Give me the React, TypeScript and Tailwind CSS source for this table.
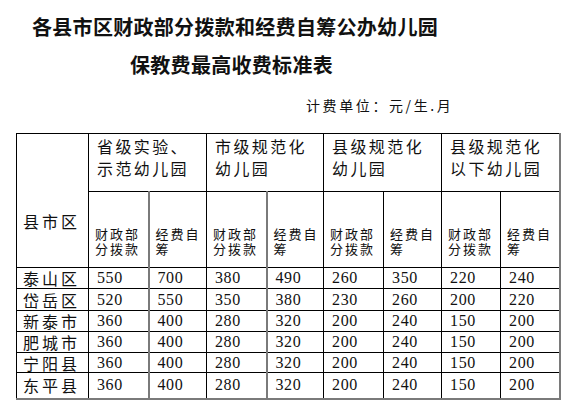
import React from "react";

const rows: [string, number[]][] = [
  ["泰山区", [550, 700, 380, 490, 260, 350, 220, 240]],
  ["岱岳区", [520, 550, 350, 380, 230, 260, 200, 220]],
  ["新泰市", [360, 400, 280, 320, 200, 240, 150, 200]],
  ["肥城市", [360, 400, 280, 320, 200, 240, 150, 200]],
  ["宁阳县", [360, 400, 280, 320, 200, 240, 150, 200]],
  ["东平县", [360, 400, 280, 320, 200, 240, 150, 200]],
];

const rowHeights = ["h-[21px]", "h-[22px]", "h-[21px]", "h-[21px]", "h-[20px]", "h-[26px]"];

const cjk = { fontFamily: '"Noto Sans CJK SC", sans-serif' };
const serif = { fontFamily: '"Liberation Serif", "Noto Sans CJK SC", serif' };

// gray, thicker rules sit after columns 2 and 4 and on the right edge
const colBorder = (i: number) =>
  i === 0 || i === 2 || i === 7 ? "border-r-2 border-r-[#7a7a7a]" : "";

export default function App() {
  return (
    <div className="w-[577px] h-[401px] bg-white text-[#111] overflow-hidden" style={cjk}>
      {/* Title */}
      <div className="pl-[32px] pt-[15px] text-[20px] leading-[24px] font-bold tracking-[0.3px]">
        各县市区财政部分拨款和经费自筹公办幼儿园
      </div>
      <div className="pl-[130px] mt-[14px] text-[20px] leading-[24px] font-bold tracking-[0.3px]">
        保教费最高收费标准表
      </div>
      <div className="pl-[306px] mt-[18px] text-[14px] leading-[20px] tracking-[2.6px]">
        计费单位：元/生.月
      </div>

      {/* Table */}
      <table className="ml-[16px] mt-[18px] w-[542px] table-fixed border-collapse">
        <colgroup>
          <col className="w-[72px]" />
          <col className="w-[60px]" />
          <col className="w-[58px]" />
          <col className="w-[60px]" />
          <col className="w-[57px]" />
          <col className="w-[60px]" />
          <col className="w-[58px]" />
          <col className="w-[59px]" />
          <col className="w-[59px]" />
        </colgroup>
        <thead>
          <tr className="h-[58px]">
            <th
              rowSpan={2}
              className="border border-black align-top pt-[77px] pl-[6px] text-left font-normal text-[16px] leading-[20px] tracking-[3px]"
            >
              县市区
            </th>
            {["省级实验、|示范幼儿园", "市级规范化|幼儿园", "县级规范化|幼儿园", "县级规范化|以下幼儿园"].map(
              (t, i) => (
                <th
                  key={t}
                  colSpan={2}
                  className={`border border-black align-top pl-[8px] pt-[1px] text-left font-normal text-[16px] leading-[22px] tracking-[2.4px] ${
                    i === 3 ? "border-r-2 border-r-[#7a7a7a]" : ""
                  }`}
                >
                  {t.split("|")[0]}
                  <br />
                  {t.split("|")[1]}
                </th>
              )
            )}
          </tr>
          <tr className="h-[76px]">
            {Array.from({ length: 8 }).map((_, i) => (
              <th
                key={i}
                className={`border border-black align-top pt-[34px] pl-[6px] text-left font-normal text-[13px] leading-[15px] tracking-[2px] ${colBorder(i)}`}
              >
                {i % 2 === 0 ? (
                  <>
                    财政部
                    <br />
                    分拨款
                  </>
                ) : (
                  <>
                    经费自
                    <br />
                    筹
                  </>
                )}
              </th>
            ))}
          </tr>
        </thead>
        <tbody>
          {rows.map(([name, vals], r) => (
            <tr key={name} className={rowHeights[r]}>
              <td
                className={`border border-black pl-[6px] text-[16px] leading-[18px] tracking-[3px] ${
                  r === rows.length - 1 ? "border-b-2 border-b-[#7a7a7a]" : ""
                }`}
              >
                {name}
              </td>
              {vals.map((v, i) => (
                <td
                  key={i}
                  className={`border border-black pl-[8px] text-[16px] leading-[18px] tracking-[0.6px] ${colBorder(i)} ${
                    r === rows.length - 1 ? "border-b-2 border-b-[#7a7a7a]" : ""
                  }`}
                  style={serif}
                >
                  {v}
                </td>
              ))}
            </tr>
          ))}
        </tbody>
      </table>
    </div>
  );
}
